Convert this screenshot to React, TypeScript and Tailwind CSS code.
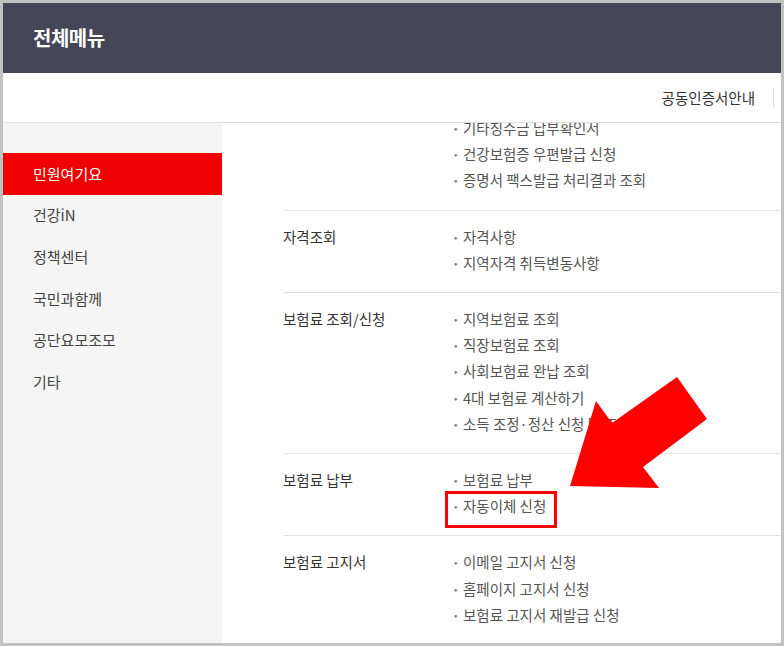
import React from 'react';

const FONT = { fontFamily: '"Noto Sans CJK KR", "Noto Sans", sans-serif' };

interface Section {
  title: string;
  items: string[];
}

const sideMenu = ['민원여기요', '건강iN', '정책센터', '국민과함께', '공단요모조모', '기타'];

const sections: Section[] = [
  { title: '', items: ['기타징수금 납부확인서', '건강보험증 우편발급 신청', '증명서 팩스발급 처리결과 조회'] },
  { title: '자격조회', items: ['자격사항', '지역자격 취득변동사항'] },
  {
    title: '보험료 조회/신청',
    items: ['지역보험료 조회', '직장보험료 조회', '사회보험료 완납 조회', '4대 보험료 계산하기', '소득 조정·정산 신청 및 조회'],
  },
  { title: '보험료 납부', items: ['보험료 납부', '자동이체 신청'] },
  { title: '보험료 고지서', items: ['이메일 고지서 신청', '홈페이지 고지서 신청', '보험료 고지서 재발급 신청'] },
];

export default function App() {
  return (
    <div className="relative w-[784px] h-[646px] bg-[#c2c2c2] p-[3px] overflow-hidden" style={FONT}>
      <div className="flex flex-col w-full h-full bg-white">
        {/* Header */}
        <div className="h-[70px] shrink-0 bg-[#464659] flex items-center px-[30px] pb-[1px]">
          <h1 className="text-[20px] font-bold text-white tracking-[-0.5px]">전체메뉴</h1>
        </div>

        {/* Util bar */}
        <div className="h-[50px] shrink-0 border-b border-[#dedede] flex items-center justify-end">
          <span className="text-[14.5px] text-[#333]">공동인증서안내</span>
          <span className="ml-[18px] mr-[7px] w-px h-[18px] bg-[#dddddd]" />
        </div>

        {/* Body */}
        <div className="flex flex-1 min-h-0">
          <nav className="w-[219px] shrink-0 bg-[#f5f5f5] pt-[30px]">
            {sideMenu.map((m, i) => (
              <div
                key={m}
                className={`h-[41.7px] flex items-center pl-[30px] text-[15px] ${
                  i === 0 ? 'bg-[#f00000] text-white' : 'text-[#444]'
                }`}
              >
                {m}
              </div>
            ))}
          </nav>

          <div className="flex-1 overflow-hidden pl-[61px]">
            <div className="-mt-[8px]">
              {sections.map((s, idx) => (
                <div
                  key={idx}
                  className={`flex border-b border-[#e3e3e3] pb-[16px] ${idx === 0 ? 'pt-0' : 'pt-[13px]'}`}
                >
                  <div className="w-[171px] shrink-0 text-[14.5px] leading-[26.2px] text-[#333]">
                    {s.title}
                  </div>
                  <ul>
                    {s.items.map((it) => (
                      <li key={it} className="flex items-center text-[14.5px] leading-[26.2px] text-[#555]">
                        <span className="w-[9px] text-[10px] text-[#777]">•</span>
                        <span className="whitespace-nowrap">{it}</span>
                      </li>
                    ))}
                  </ul>
                </div>
              ))}
            </div>
          </div>
        </div>
      </div>

      {/* Annotation: highlight box */}
      <div className="absolute left-[445px] top-[491px] w-[112px] h-[37px] border-[3px] border-[#ff0000]" />

      {/* Annotation: arrow */}
      <svg className="absolute left-0 top-0" width="784" height="646" viewBox="0 0 784 646">
        <polygon
          points="570,486 596,401 612,423 677,377 707,419 643,467 659,488"
          fill="#ff0000"
        />
      </svg>
    </div>
  );
}
